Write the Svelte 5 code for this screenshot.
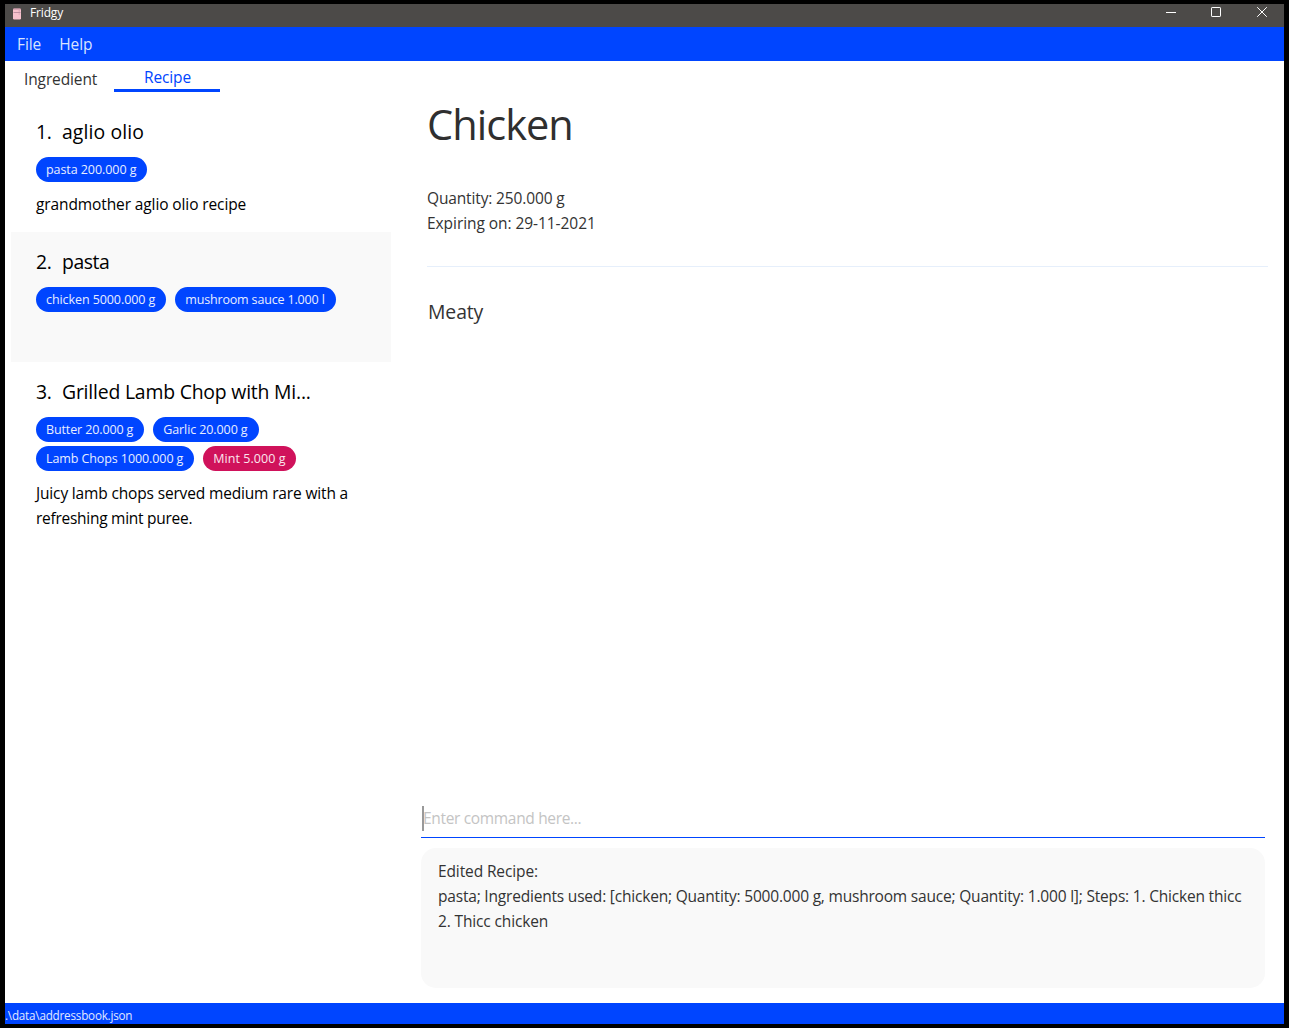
<script>
  const menus = ['File', 'Help'];

  const recipes = [
    {
      name: 'aglio olio',
      tracking: 0.1,
      ingredients: [{ label: 'pasta 200.000 g', tracking: -0.07 }],
      lines: [{ text: 'grandmother aglio olio recipe', tracking: -0.11 }]
    },
    {
      name: 'pasta',
      tracking: -0.42,
      selected: true,
      ingredients: [
        { label: 'chicken 5000.000 g', tracking: -0.08 },
        { label: 'mushroom sauce 1.000 l', tracking: -0.16 }
      ],
      lines: [{ text: '', tracking: 0 }]
    },
    {
      name: 'Grilled Lamb Chop with Mi...',
      tracking: -0.2,
      ingredients: [
        { label: 'Butter 20.000 g', tracking: -0.12 },
        { label: 'Garlic 20.000 g', tracking: -0.1 },
        { label: 'Lamb Chops 1000.000 g', tracking: -0.09 },
        { label: 'Mint 5.000 g', tracking: 0.04, missing: true }
      ],
      lines: [
        { text: 'Juicy lamb chops served medium rare with a', tracking: -0.157 },
        { text: 'refreshing mint puree.', tracking: -0.27 }
      ]
    }
  ];

  const facts = [
    { text: 'Quantity: 250.000 g', tracking: -0.14 },
    { text: 'Expiring on: 29-11-2021', tracking: -0.06 }
  ];

  const result = [
    { text: 'Edited Recipe:', tracking: -0.12 },
    {
      text: 'pasta; Ingredients used: [chicken; Quantity: 5000.000 g, mushroom sauce; Quantity: 1.000 l]; Steps: 1. Chicken thicc',
      tracking: -0.195
    },
    { text: '2. Thicc chicken', tracking: -0.14 }
  ];
</script>

<div class="window">
  <header class="titlebar">
    <svg class="logo" viewBox="0 0 8 12" width="8" height="12">
      <rect x="0" y="0.5" width="8" height="11" rx="1.2" fill="#f6c1cc" />
      <path d="M0.5 1H7.5M0.5 4.5H7.5" stroke="#b98a9c" stroke-width="0.9" />
      <path d="M6.2 2.2V3.6M6.2 5.4V6.6" stroke="#c99aac" stroke-width="0.9" />
    </svg>
    <span class="app-name">Fridgy</span>
    <div class="controls">
      <svg viewBox="0 0 10 10" width="10" height="10"><path d="M0 5.5H10" /></svg>
      <svg viewBox="0 0 10 10" width="10" height="10"><rect x="0.5" y="0.5" width="9" height="9" rx="0.6" /></svg>
      <svg class="close" viewBox="0 0 10 10" width="10" height="10"><path d="M0.2 0.2L9.8 9.8M9.8 0.2L0.2 9.8" /></svg>
    </div>
  </header>

  <nav class="menubar">
    {#each menus as menu}<span>{menu}</span>{/each}
  </nav>

  <main>
    <section class="sidebar">
      <div class="tabs">
        <span class="tab">Ingredient</span>
        <span class="tab active">Recipe</span>
      </div>
      {#each recipes as recipe, i}
        <article class="card" class:selected={recipe.selected}>
          <h2><span class="index">{i + 1}.</span><span style:letter-spacing="{recipe.tracking}px">{recipe.name}</span></h2>
          <div class="pills">
            {#each recipe.ingredients as item}
              <span class="pill" class:missing={item.missing} style:letter-spacing="{item.tracking}px">{item.label}</span>
            {/each}
          </div>
          {#each recipe.lines as line}
            <p style:letter-spacing="{line.tracking}px">{line.text}</p>
          {/each}
        </article>
      {/each}
    </section>

    <section class="content">
      <div class="detail">
        <h1>Chicken</h1>
        <div class="facts">
          {#each facts as fact}<p style:letter-spacing="{fact.tracking}px">{fact.text}</p>{/each}
        </div>
        <div class="description">Meaty</div>
      </div>
      <div class="command"><span class="caret"></span><span class="hint">Enter command here...</span></div>
      <div class="result">
        {#each result as line}<p style:letter-spacing="{line.tracking}px">{line.text}</p>{/each}
      </div>
    </section>
  </main>

  <footer>.\data\addressbook.json</footer>
</div>

<style>
  :global(body) {
    background: #000;
  }
  .window {
    box-sizing: border-box;
    width: 1289px;
    height: 1028px;
    border: solid #000;
    border-width: 4px 5px;
    display: flex;
    flex-direction: column;
    background: #fff;
    color: #333;
    font: 15.5px/25px 'Open Sans', 'Noto Sans', sans-serif;
    white-space: nowrap;
    overflow: hidden;
  }
  h1, h2, p {
    margin: 0;
    font-weight: 400;
  }
  .titlebar {
    height: 23px;
    display: flex;
    align-items: flex-start;
    background: #4c4a48;
    color: #fff;
  }
  .logo {
    margin: 4px 9px 0 8px;
  }
  .app-name {
    font-size: 12px;
    line-height: 18px;
    letter-spacing: -0.15px;
  }
  .controls {
    margin: 3px 17px 0 auto;
    display: flex;
    gap: 35px;
  }
  .controls svg {
    fill: none;
    stroke: #fff;
    stroke-width: 1;
    overflow: visible;
  }
  .controls .close {
    margin-left: 1px;
  }
  .menubar {
    height: 34px;
    display: flex;
    gap: 18px;
    padding-left: 12px;
    background: #0045ff;
    color: #d9e3ff;
    line-height: 34px;
    letter-spacing: -0.08px;
  }
  main {
    flex: 1;
    display: flex;
    min-height: 0;
  }
  .sidebar {
    width: 380px;
    padding-left: 6px;
  }
  .tabs {
    display: flex;
    height: 41px;
  }
  .tab {
    box-sizing: border-box;
    width: 103px;
    padding: 6px 0 0 13px;
    letter-spacing: -0.12px;
  }
  .tab.active {
    width: 106px;
    height: 31px;
    padding: 4px 0 0 1px;
    border-bottom: 3px solid #0045ff;
    color: #0045ff;
    text-align: center;
  }
  .card {
    padding: 15px 25px;
    color: #000;
  }
  .card.selected {
    background: #f9f9f9;
  }
  .card p {
    height: 25px;
  }
  h2 {
    display: flex;
    font-size: 19.4px;
    line-height: 30px;
  }
  .index {
    width: 26px;
    letter-spacing: -0.3px;
  }
  .pills {
    display: flex;
    flex-wrap: wrap;
    gap: 4px 9px;
    margin: 10px 0;
  }
  .pill {
    padding: 0 11px 0 10px;
    border-radius: 13px;
    background: #0045ff;
    color: #e8eeff;
    font-size: 12.5px;
    line-height: 25px;
  }
  .pill.missing {
    background: #d0125b;
    color: #fbe6ee;
  }
  .content {
    flex: 1;
    display: flex;
    flex-direction: column;
    padding: 32px 19px 15px 30px;
  }
  .detail {
    flex: 1;
    margin: 0 -3px 0 6px;
  }
  h1 {
    font-size: 41.5px;
    line-height: 63px;
    letter-spacing: -0.95px;
    color: #2f2f2f;
  }
  .facts {
    margin-top: 30px;
    padding-bottom: 30px;
    border-bottom: 1px solid #e6effb;
  }
  .description {
    margin-top: 30px;
    padding-left: 1px;
    font-size: 19.4px;
    line-height: 30px;
    letter-spacing: -0.1px;
  }
  .command {
    height: 31px;
    display: flex;
    padding-left: 1px;
    border-bottom: 1px solid #0045ff;
    color: #c4c4c4;
  }
  .caret {
    width: 2px;
    height: 25px;
    margin-right: -1px;
    background: #999;
  }
  .hint {
    letter-spacing: -0.33px;
  }
  .result {
    box-sizing: border-box;
    height: 140px;
    margin-top: 10px;
    padding: 11px 17px;
    border-radius: 15px;
    background: #f9f9f9;
  }
  footer {
    height: 21px;
    background: #0045ff;
    color: #e0e8ff;
    font-size: 11.7px;
    line-height: 24px;
    letter-spacing: -0.22px;
  }
</style>
